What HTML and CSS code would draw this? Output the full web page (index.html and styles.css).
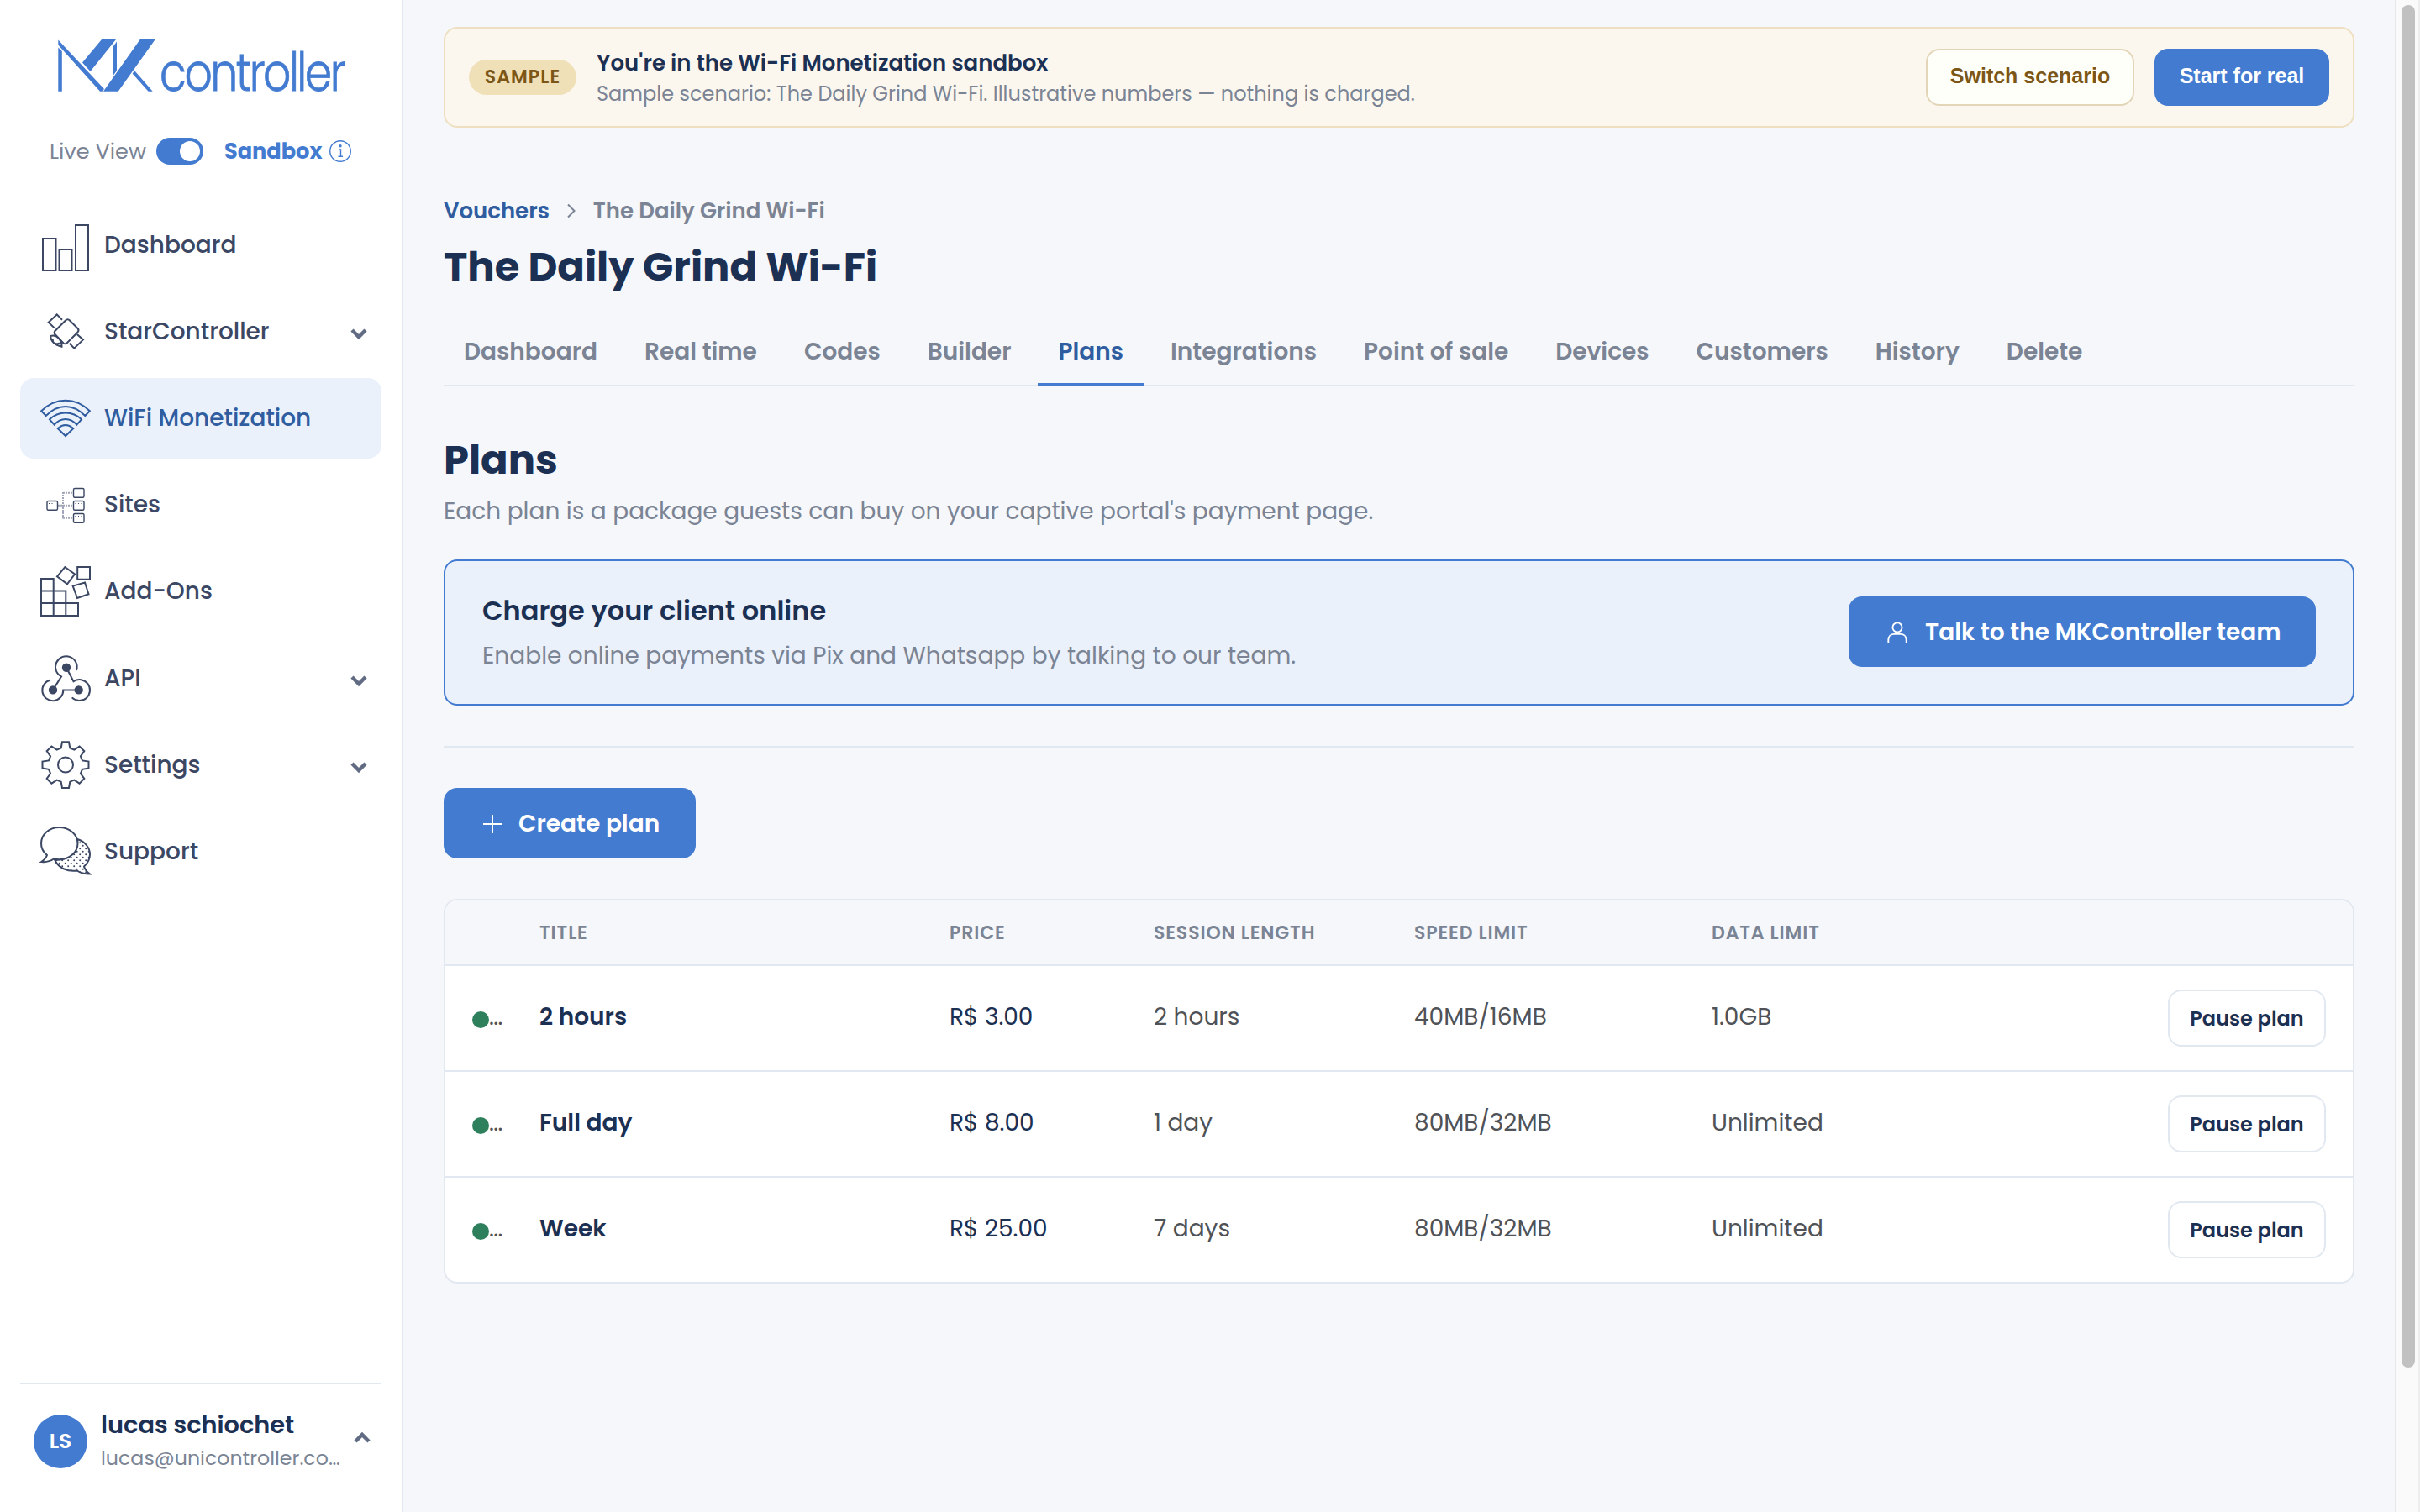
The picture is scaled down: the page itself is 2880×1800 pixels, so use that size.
FILE: index.html
```html
<!DOCTYPE html>
<html lang="en">
<head>
    <meta charset="UTF-8">
    <meta name="viewport" content="width=device-width, initial-scale=1.0">
    <title>Plans - The Daily Grind Wi-Fi</title>
    <link rel="stylesheet" href="styles.css">
</head>
<body>
    <div class="app">
        <!-- Sidebar -->
        <aside class="sidebar">
            <svg class="logo" viewBox="69 47 342 62">
                <path d="M69.3 56.5l4.5 4.5v47.7h-4.5zM69.3 47.5L124 106l-2.500 2.700h-2.500L69.300 53.500zM121 47h17l-30.500 38-9.500-10.500zM135 55l4-5.500V84l-4 5.500zM166.700 47h18l-44 61.700H123z"/>
                <path d="M157.500 87.500l3-3 21.200 24.200h-5.200z"/>
                <text x="190" y="108" textLength="219" lengthAdjust="spacingAndGlyphs">controller</text>
            </svg>

            <div class="view-switch">
                <span class="live">Live View</span>
                <span class="toggle"></span>
                <span class="sandbox">Sandbox</span>
                <svg class="info" viewBox="0 0 26 26"><circle cx="13" cy="13" r="12.300"/><path d="M11 11h2.500v8M10.500 19.200h5.500"/><circle class="dot" cx="13" cy="6.800" r="1.700"/></svg>
            </div>

            <nav class="menu">
                <a class="item">
                    <svg class="icon" viewBox="0 0 60 60"><path d="M3 22h15.500v38H3zM22.500 35h15v25h-15zM42 6h15v54H42z"/></svg>
                    <span>Dashboard</span>
                </a>
                <a class="item">
                    <svg class="icon" viewBox="0 0 60 60"><path d="M30 16.500q2.500-2.500 5 0l9.500 9.500q2 2 0 4.500L31.500 43.500q-2 1.500-4 0L17 32.500q-1-1.500 0-3zM26 15.700l-6.300-6.300-10 9.300 7 6.700M34.700 43.700l5.600 6L51 39.400 43.700 33M12 35q1 10 13.500 12.700Q26 43 22 38t-10-3zM15 39q-1 4 3 5t5-1"/></svg>
                    <span>StarController</span>
                    <svg class="chevron" viewBox="0 0 20 14"><path d="M2 3l8 8 8-8"/></svg>
                </a>
                <a class="item active">
                    <svg class="icon" viewBox="0 0 60 60"><path d="M1.200 21.300C18 4.500 42 4.500 58.800 21.300L53.300 27C39 12.300 21 12.300 6.700 27zM11 31.300c10.500-10.500 27.500-10.500 38 0l-5.700 6.400c-7.500-9-19.100-9-26.600 0zM20.700 42q9.300-8 18.600 0L30 51z"/></svg>
                    <span>WiFi Monetization</span>
                </a>
                <a class="item">
                    <svg class="icon sites" viewBox="0 0 60 60"><path class="links" d="M21 30.800h18M27 15v31.500M27 15.800h12M27 45.800h12"/><rect x="8" y="25.500" width="12.500" height="10.700" rx="1.500"/><rect x="39.500" y="10.500" width="12.500" height="10.700" rx="1.500"/><rect x="39.500" y="25.500" width="12.500" height="10.700" rx="1.500"/><rect x="39.500" y="40.500" width="12.500" height="10.700" rx="1.500"/><path class="leds" d="M10 28.500h8.500M41.500 13.500H50M41.500 28.500H50M41.500 43.500H50"/></svg>
                    <span>Sites</span>
                </a>
                <a class="item">
                    <svg class="icon" viewBox="0 0 60 60"><path d="M1 15h14.700v44H1zM1 29.600h29.300V59H1zM1 44h44v15H1zM44.200 1h14.800v14.700H44.200zM29.300 1L41 9.500l-9 11.800-12-9zM38.700 23.600L53 19.500l4.500 13.800L44 38z"/></svg>
                    <span>Add-Ons</span>
                </a>
                <a class="item">
                    <svg class="icon" viewBox="0 0 60 60"><path d="M43 20A12.800 12.800 0 1 0 25 27.400L15 43.400M12 31.500A12.500 12.500 0 1 0 27.300 43.400H45.700M31 16.700l8.500 16.500A12.500 12.500 0 1 1 37.700 52.400"/><g class="nodes"><circle cx="31" cy="16.700" r="5.200"/><circle cx="15" cy="43.400" r="5.200"/><circle cx="45.700" cy="43.400" r="5.200"/></g></svg>
                    <span>API</span>
                    <svg class="chevron" viewBox="0 0 20 14"><path d="M2 3l8 8 8-8"/></svg>
                </a>
                <a class="item">
                    <svg class="icon" viewBox="0 0 60 60"><circle cx="30" cy="29.500" r="9"/><path d="M24.700 9.500L26 2.200h8l1.300 7.300 5.100 2.100 6.200-4.100 5.700 5.700-4.400 6.100 2.100 5.100 7.500 1.200v8L50 34.800l-2.100 5.100 4.400 6.100-5.700 5.700-6.200-4.100-5.100 2.100L34 57h-8l-1.300-7.300-5.100-2.100-6.200 4.100L7.700 46l4.400-6.100L10 34.800l-7.500-1.200v-8L10 24.400l2.100-5.100-4.400-6.100 5.700-5.700 6.200 4.100z"/></svg>
                    <span>Settings</span>
                    <svg class="chevron" viewBox="0 0 20 14"><path d="M2 3l8 8 8-8"/></svg>
                </a>
                <a class="item">
                    <svg class="icon" viewBox="0 0 60 60"><defs><pattern id="dots" width="7" height="7" patternUnits="userSpaceOnUse"><circle class="dot" cx="1.700" cy="1.700" r="1"/><circle class="dot" cx="5.200" cy="5.200" r="1"/></pattern></defs><path fill="url(#dots)" d="M44 15C54 18 59 26 59 33c0 6-3 11-7 14.500 1 4 3.500 6.500 7 9-6 0-11-1-15.300-4C33 54 22 50 17 39.500 34 41 46 28 44 15z"/><path fill="#fff" d="M22.500 1C34.500 1 44.500 9.500 44.500 20S34.500 39.300 22.500 39.300c-3 0-4.500-.3-6.500-.8C11 42 6 42.500 1.200 42 5 39.500 7 37 8 34 3.500 30.500 1 25.500 1 20 1 9.500 10.500 1 22.500 1z"/></svg>
                    <span>Support</span>
                </a>
            </nav>

            <div class="user">
                <div class="avatar">LS</div>
                <div class="user-text">
                    <div class="user-name">lucas schiochet</div>
                    <div class="user-mail">lucas@unicontroller.co…</div>
                </div>
                <svg class="chevron" viewBox="0 0 20 14"><path d="M2 11l8-8 8 8"/></svg>
            </div>
        </aside>

        <!-- Content -->
        <main class="main">
            <div class="banner">
                <span class="sample">SAMPLE</span>
                <div class="banner-text">
                    <div class="banner-title">You're in the Wi-Fi Monetization sandbox</div>
                    <div class="banner-sub">Sample scenario: The Daily Grind Wi-Fi. Illustrative numbers — nothing is charged.</div>
                </div>
                <button class="banner-btn switch">Switch scenario</button>
                <button class="banner-btn start">Start for real</button>
            </div>

            <div class="breadcrumb">
                <a>Vouchers</a>
                <svg viewBox="0 0 10 18"><path d="M1 1.500L8.500 9 1 16.500"/></svg>
                <span>The Daily Grind Wi-Fi</span>
            </div>
            <h1>The Daily Grind Wi-Fi</h1>

            <div class="tabs">
                <div class="tab">Dashboard</div>
                <div class="tab">Real time</div>
                <div class="tab">Codes</div>
                <div class="tab">Builder</div>
                <div class="tab active">Plans</div>
                <div class="tab">Integrations</div>
                <div class="tab">Point of sale</div>
                <div class="tab">Devices</div>
                <div class="tab">Customers</div>
                <div class="tab">History</div>
                <div class="tab">Delete</div>
            </div>

            <h2>Plans</h2>
            <p class="lead">Each plan is a package guests can buy on your captive portal's payment page.</p>

            <div class="charge">
                <div>
                    <h3>Charge your client online</h3>
                    <p>Enable online payments via Pix and Whatsapp by talking to our team.</p>
                </div>
                <button class="btn talk">
                    <svg viewBox="0 0 28 28"><circle cx="14" cy="7.500" r="6"/><path d="M2.500 27v-3.500c0-5 3.500-7.500 7-7.500h9c3.500 0 7 2.500 7 7.500V27"/></svg>
                    Talk to the MKController team
                </button>
            </div>

            <div class="divider"></div>

            <button class="btn create">
                <svg viewBox="0 0 22 22"><path d="M11 0v22M0 11h22"/></svg>
                Create plan
            </button>

            <div class="table-box">
                <table>
                    <colgroup>
                        <col class="c-status"><col class="c-title"><col class="c-price"><col class="c-session"><col class="c-speed"><col class="c-data"><col>
                    </colgroup>
                    <thead>
                        <tr><th></th><th>TITLE</th><th>PRICE</th><th>SESSION LENGTH</th><th>SPEED LIMIT</th><th>DATA LIMIT</th><th></th></tr>
                    </thead>
                    <tbody>
                        <tr>
                            <td class="status"><i></i>…</td>
                            <td class="name">2 hours</td>
                            <td class="price">R$ 3.00</td>
                            <td>2 hours</td>
                            <td>40MB/16MB</td>
                            <td>1.0GB</td>
                            <td class="action"><button>Pause plan</button></td>
                        </tr>
                        <tr>
                            <td class="status"><i></i>…</td>
                            <td class="name">Full day</td>
                            <td class="price">R$ 8.00</td>
                            <td>1 day</td>
                            <td>80MB/32MB</td>
                            <td>Unlimited</td>
                            <td class="action"><button>Pause plan</button></td>
                        </tr>
                        <tr>
                            <td class="status"><i></i>…</td>
                            <td class="name">Week</td>
                            <td class="price">R$ 25.00</td>
                            <td>7 days</td>
                            <td>80MB/32MB</td>
                            <td>Unlimited</td>
                            <td class="action"><button>Pause plan</button></td>
                        </tr>
                    </tbody>
                </table>
            </div>
        </main>

        <div class="scrollbar"><div class="thumb"></div></div>
    </div>
</body>
</html>
```
FILE: styles.css
```css
* {
    box-sizing: border-box;
}

body {
    margin: 0;
    font-family: Poppins, Inter, sans-serif;
    font-size: 28px;
    line-height: 42px;
    color: #1b3053;
    background: #f5f7fb;
    overflow: hidden;
}

h1, h2, h3, p {
    margin: 0;
}

button {
    font-family: inherit;
    white-space: nowrap;
    cursor: pointer;
}

svg {
    fill: none;
    stroke: currentColor;
    stroke-width: 2;
    flex-shrink: 0;
    overflow: visible;
}

.app {
    display: flex;
    height: 1800px;
}

/* Sidebar */
.sidebar {
    display: flex;
    flex-direction: column;
    width: 480px;
    flex-shrink: 0;
    padding: 47px 24px 0;
    background: #fff;
    border-right: 2px solid #e2e8f0;
}

.logo {
    width: 342px;
    height: 62px;
    margin-left: 45px;
    fill: #437bd1;
    stroke: none;
}

.logo text {
    font-family: Poppins, Inter, sans-serif;
    font-size: 63px;
    font-weight: 300;
    letter-spacing: -3px;
    stroke: #437bd1;
    stroke-width: 0.8;
}

.view-switch {
    display: flex;
    align-items: center;
    height: 40px;
    margin: 51px 0 0 35px;
    font-size: 25.6px;
    line-height: 40px;
    white-space: nowrap;
}

.live {
    width: 127px;
    padding-bottom: 1px;
    color: #7b8494;
}

.toggle {
    width: 56px;
    height: 32px;
    padding: 4px;
    border-radius: 16px;
    background: #437bd1;
}

.toggle::after {
    content: "";
    display: block;
    width: 24px;
    height: 24px;
    margin-left: 24px;
    border-radius: 50%;
    background: #fff;
}

.sandbox {
    width: 125px;
    margin-left: 25px;
    padding-bottom: 1px;
    font-weight: 700;
    color: #437bd1;
}

.info {
    width: 26px;
    height: 26px;
    color: #437bd1;
    stroke-width: 1.4;
}

.dot {
    fill: currentColor;
    stroke: none;
}

.menu {
    display: flex;
    flex-direction: column;
    gap: 8px;
    margin-top: 44px;
}

.item {
    display: flex;
    align-items: center;
    height: 95.2px;
    padding: 0 17px 0 24px;
    border-radius: 16px;
    font-weight: 500;
    color: #3b4763;
}

.item span {
    flex: 1;
}

.item.active {
    background: #eaf1fb;
    color: #2f5d9f;
}

.icon {
    width: 60px;
    height: 60px;
    margin-right: 16px;
}

.sites {
    stroke-width: 1.4;
}

.links {
    stroke: #a1a6b8;
    stroke-width: 2;
    stroke-dasharray: 2 1;
}

.leds {
    stroke-width: 1;
    stroke-dasharray: 1 2.500;
}

.nodes {
    fill: currentColor;
    stroke: none;
}

.chevron {
    width: 20px;
    height: 14px;
    margin-top: 5px;
    stroke-width: 4.500;
    color: #616c84;
}

.user {
    display: flex;
    align-items: center;
    box-sizing: content-box;
    height: 82px;
    margin-top: auto;
    margin-bottom: 43px;
    padding: 27px 13px 0 16px;
    border-top: 2px solid #e2e8f0;
}

.user .chevron {
    margin: 0 0 8px;
}

.avatar {
    width: 64px;
    height: 64px;
    flex-shrink: 0;
    margin-right: 16px;
    border-radius: 50%;
    background: #437bd1;
    color: #fff;
    font-size: 25px;
    font-weight: 600;
    line-height: 63px;
    text-align: center;
}

.user-text {
    flex: 1;
    padding-bottom: 2px;
    white-space: nowrap;
}

.user-name {
    font-size: 28.8px;
    font-weight: 600;
    line-height: 42px;
}

.user-mail {
    font-size: 23.7px;
    line-height: 38px;
    color: #7b8494;
}

/* Main */
.main {
    width: 2370px;
    padding: 32px 48px 0;
}

.banner {
    display: flex;
    align-items: center;
    height: 120px;
    padding: 0 28px;
    border: 2px solid #eedfc0;
    border-radius: 16px;
    background: #fcf7ee;
}

.sample {
    width: 128px;
    height: 42px;
    margin-right: 24px;
    border-radius: 21px;
    background: #f0e0b8;
    color: #7c5617;
    font-size: 22px;
    font-weight: 600;
    line-height: 42px;
    letter-spacing: 0.05em;
    text-align: center;
}

.banner-text {
    flex: 1;
    padding-top: 4px;
    white-space: nowrap;
}

.banner-title {
    font-size: 26px;
    font-weight: 600;
    line-height: 36px;
}

.banner-sub {
    font-size: 24px;
    line-height: 38px;
    color: #7b8494;
}

.banner-btn {
    height: 68px;
    padding: 0 0 3px;
    border-radius: 16px;
    font-family: "Liberation Sans", Arial, sans-serif;
    font-size: 25px;
    font-weight: 700;
}

.switch {
    width: 248px;
    margin-right: 24px;
    border: 2px solid #e3d5b8;
    background: #fffffa;
    color: #7c5617;
}

.start {
    width: 208px;
    border: none;
    background: #437bd1;
    color: #fff;
}

.breadcrumb {
    display: flex;
    align-items: center;
    margin-top: 79px;
    font-size: 26px;
    font-weight: 600;
    line-height: 40px;
    color: #7b8494;
}

.breadcrumb a {
    color: #2f5d9f;
}

.breadcrumb svg {
    width: 10px;
    height: 18px;
    margin: 0 21px;
}

h1, h2 {
    font-size: 48px;
    font-weight: 700;
    line-height: 72px;
}

h1 {
    margin: 11px 0 26px;
}

.tabs {
    display: flex;
    gap: 8px;
    height: 80px;
    border-bottom: 2px solid #e2e8f0;
    color: #7b8494;
}

.tab {
    height: 80px;
    padding: 19px 24px 0;
    font-weight: 600;
    line-height: 40px;
    white-space: nowrap;
}

.tab.active {
    color: #2f5d9f;
    border-bottom: 4px solid #437bd1;
}

h2 {
    margin-top: 52px;
}

.lead {
    margin: 3px 0 35px;
    line-height: 44px;
    color: #7b8494;
}

.charge {
    display: flex;
    align-items: center;
    justify-content: space-between;
    height: 174px;
    padding: 0 44px;
    border: 2px solid #437bd1;
    border-radius: 16px;
    background: #eaf1fb;
}

.charge h3 {
    margin-bottom: 8px;
    font-size: 32px;
    font-weight: 600;
    line-height: 48px;
}

.charge p {
    line-height: 44px;
    color: #7b8494;
}

.btn {
    display: flex;
    align-items: center;
    gap: 20px;
    height: 84px;
    padding: 2px 0 0 45px;
    border: none;
    border-radius: 16px;
    background: #437bd1;
    color: #fff;
    font-size: 28px;
    font-weight: 600;
    line-height: 42px;
}

.talk {
    width: 556px;
    margin-bottom: 2px;
}

.talk svg {
    width: 26px;
    height: 26px;
}

.create {
    width: 300px;
    padding-left: 47px;
}

.create svg {
    width: 22px;
    height: 22px;
}

.divider {
    height: 2px;
    margin: 48px 0;
    background: #e2e8f0;
}

/* Plans table */
.table-box {
    margin-top: 48px;
    border: 2px solid #e2e8f0;
    border-radius: 16px;
    background: #fff;
    overflow: hidden;
}

table {
    width: 100%;
    table-layout: fixed;
    border-spacing: 0;
}

.c-status { width: 80px; }
.c-title { width: 488px; }
.c-price { width: 243px; }
.c-session { width: 310px; }
.c-speed { width: 354px; }
.c-data { width: 400px; }

th {
    height: 78px;
    padding: 2px 0 0 32px;
    border-bottom: 2px solid #e2e8f0;
    background: #f5f7fb;
    color: #7b8494;
    font-size: 22px;
    font-weight: 600;
    line-height: 32px;
    letter-spacing: 0.04em;
    text-align: left;
    white-space: nowrap;
}

td {
    height: 126px;
    padding: 0 0 2px 32px;
    border-bottom: 2px solid #e2e8f0;
    color: #4f5257;
    white-space: nowrap;
}

tr:last-child td {
    height: 124px;
    border-bottom: none;
}

.status {
    font-size: 28px;
}

.status i {
    display: inline-block;
    width: 20px;
    height: 20px;
    border-radius: 50%;
    background: #2e7f5b;
    vertical-align: -4px;
}

.name {
    font-weight: 600;
    color: #1b3053;
}

.price {
    color: #1b3053;
}

.action {
    padding: 0 32px 0 0;
    text-align: right;
}

.action button {
    width: 188px;
    height: 68px;
    padding: 0;
    border: 2px solid #e2e8f0;
    border-radius: 16px;
    background: #fff;
    color: #1b3053;
    font-size: 24px;
    font-weight: 600;
}

/* Page scrollbar */
.scrollbar {
    width: 30px;
    padding: 6px 0 0 6px;
    border-left: 2px solid #e8e8e8;
    border-right: 2px solid #eee;
    background: #fafafa;
}

.thumb {
    width: 16px;
    height: 1622px;
    border-radius: 8px;
    background: #c1c1c1;
}
```
